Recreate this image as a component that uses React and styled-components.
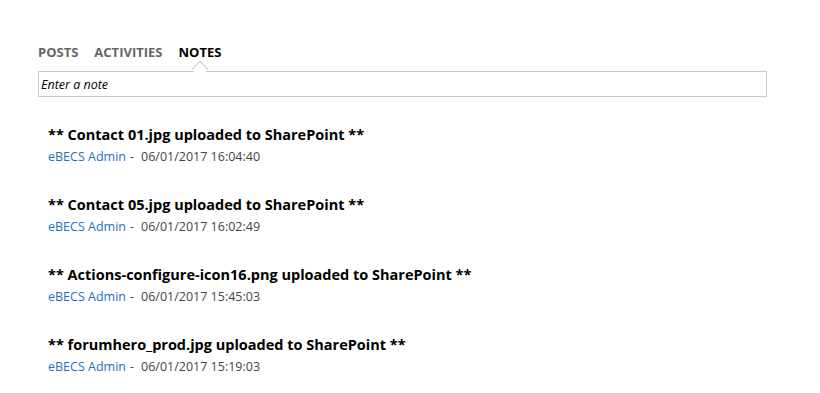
import React from "react";
import styled, { createGlobalStyle } from "styled-components";

const Global = createGlobalStyle`
  html, body { margin: 0; padding: 0; background: #fff; }
  body { font-family: "Segoe UI", "Open Sans", "Noto Sans", sans-serif; }
`;

const Page = styled.div`
  width: 820px;
  height: 393px;
  padding: 42px 53px 0 38px;
  box-sizing: border-box;
`;

const Tabs = styled.div`
  display: flex;
  gap: 16px;
  height: 20px;
  align-items: center;
`;

const Tab = styled.div`
  position: relative;
  font-size: 13px;
  font-weight: 700;
  letter-spacing: 0;
  color: ${(p) => (p.$active ? "#000" : "#666")};
`;

const Notch = styled.span`
  position: absolute;
  left: 50%;
  bottom: -14px;
  width: 11px;
  height: 11px;
  background: #fff;
  border-left: 1px solid #c8c8c8;
  border-top: 1px solid #c8c8c8;
  transform: translateX(-50%) rotate(45deg);
  z-index: 2;
`;

const NoteInput = styled.div`
  margin-top: 9px;
  height: 26px;
  border: 1px solid #c8c8c8;
  box-sizing: border-box;
  display: flex;
  align-items: center;
  padding-left: 2px;
  font-size: 12.5px;
  font-style: italic;
  color: #000;
  position: relative;
  z-index: 1;
`;

const List = styled.div`
  display: flex;
  flex-direction: column;
  padding: 28px 0 0 10px;
  gap: 29px;
`;

const Item = styled.div`
  display: flex;
  flex-direction: column;
  gap: 3px;
`;

const Title = styled.div`
  font-size: 14.5px;
  font-weight: 700;
  letter-spacing: 0;
  color: #000;
  line-height: 20px;
`;

const Meta = styled.div`
  font-size: 12.5px;
  line-height: 18px;
  color: #444;
`;

const Author = styled.span`
  color: #1e6fc4;
`;

const Sep = styled.span`
  margin: 0 7px 0 4px;
`;

const notes = [
  ["** Contact 01.jpg uploaded to SharePoint **", "06/01/2017 16:04:40"],
  ["** Contact 05.jpg uploaded to SharePoint **", "06/01/2017 16:02:49"],
  ["** Actions-configure-icon16.png uploaded to SharePoint **", "06/01/2017 15:45:03"],
  ["** forumhero_prod.jpg uploaded to SharePoint **", "06/01/2017 15:19:03"],
];

export default function App() {
  return (
    <>
      <Global />
      <Page>
        <Tabs>
          <Tab>POSTS</Tab>
          <Tab>ACTIVITIES</Tab>
          <Tab $active>
            NOTES
            <Notch />
          </Tab>
        </Tabs>
        <NoteInput>Enter a note</NoteInput>
        <List>
          {notes.map(([t, d]) => (
            <Item key={t}>
              <Title>{t}</Title>
              <Meta>
                <Author>eBECS Admin</Author>
                <Sep>-</Sep>
                {d}
              </Meta>
            </Item>
          ))}
        </List>
      </Page>
    </>
  );
}
